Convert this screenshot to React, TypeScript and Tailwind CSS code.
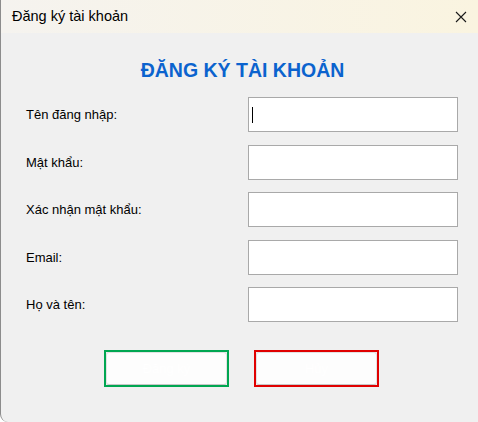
import React from 'react';

const fields = [
  { label: 'Tên đăng nhập:', gap: 'mt-0', focused: true },
  { label: 'Mật khẩu:', gap: 'mt-[13px]', focused: false },
  { label: 'Xác nhận mật khẩu:', gap: 'mt-[12px]', focused: false },
  { label: 'Email:', gap: 'mt-[13px]', focused: false },
  { label: 'Họ và tên:', gap: 'mt-[12px]', focused: false },
];

const App: React.FC = () => {
  return (
    <div className="w-[478px] h-[422px] bg-white overflow-hidden">
      <div
        className="w-full h-full flex flex-col bg-[#f0f0f0] border-l border-[#8c8c8c] rounded-bl-[8px] overflow-hidden"
        style={{ fontFamily: '"Liberation Sans", Arial, sans-serif' }}
      >
        {/* title bar */}
        <div className="h-[33px] shrink-0 flex items-center justify-between pl-[11px] pr-[10px] bg-gradient-to-r from-[#f5f3ef] to-[#faf4e0]">
          <span className="text-[14.5px] text-black">Đăng ký tài khoản</span>
          <svg width="12" height="12" viewBox="0 0 12 12" className="mr-[1px]">
            <path d="M1 1 L11 11 M11 1 L1 11" stroke="#1a1a1a" strokeWidth="1.1" />
          </svg>
        </div>

        <h1 className="mt-[25px] h-[24px] leading-[24px] text-center text-[19.5px] font-bold text-[#0b63ce] pl-[6px]">
          ĐĂNG KÝ TÀI KHOẢN
        </h1>

        <div className="mt-[15px] flex flex-col">
          {fields.map((f) => (
            <div key={f.label} className={`${f.gap} h-[35px] flex items-center`}>
              <label className="w-[247px] shrink-0 pl-[25px] text-[13px] text-black">{f.label}</label>
              <div className="w-[210px] h-[35px] shrink-0 bg-white border border-[#a9a9a9] flex items-center pl-[3px]">
                {f.focused && <div className="w-px h-[16px] bg-black" />}
              </div>
            </div>
          ))}
        </div>

        <div className="mt-[28px] flex gap-[25px] pl-[103px]">
          <button className="w-[125px] h-[37px] border-2 border-[#00a651] bg-[#f0f0f0] p-0">
            <div className="w-full h-full rounded-[3px] bg-[#fdfdfd] border border-[#e2e2e2] border-b-[#c8c8c8] flex items-center justify-center text-[13px] text-white">
              Đăng ký
            </div>
          </button>
          <button className="w-[125px] h-[37px] border-2 border-[#e00000] bg-[#f0f0f0] p-0">
            <div className="w-full h-full rounded-[3px] bg-[#fdfdfd] border border-[#e2e2e2] border-b-[#c8c8c8] flex items-center justify-center text-[13px] text-white">
              Hủy
            </div>
          </button>
        </div>
      </div>
    </div>
  );
};

export default App;
